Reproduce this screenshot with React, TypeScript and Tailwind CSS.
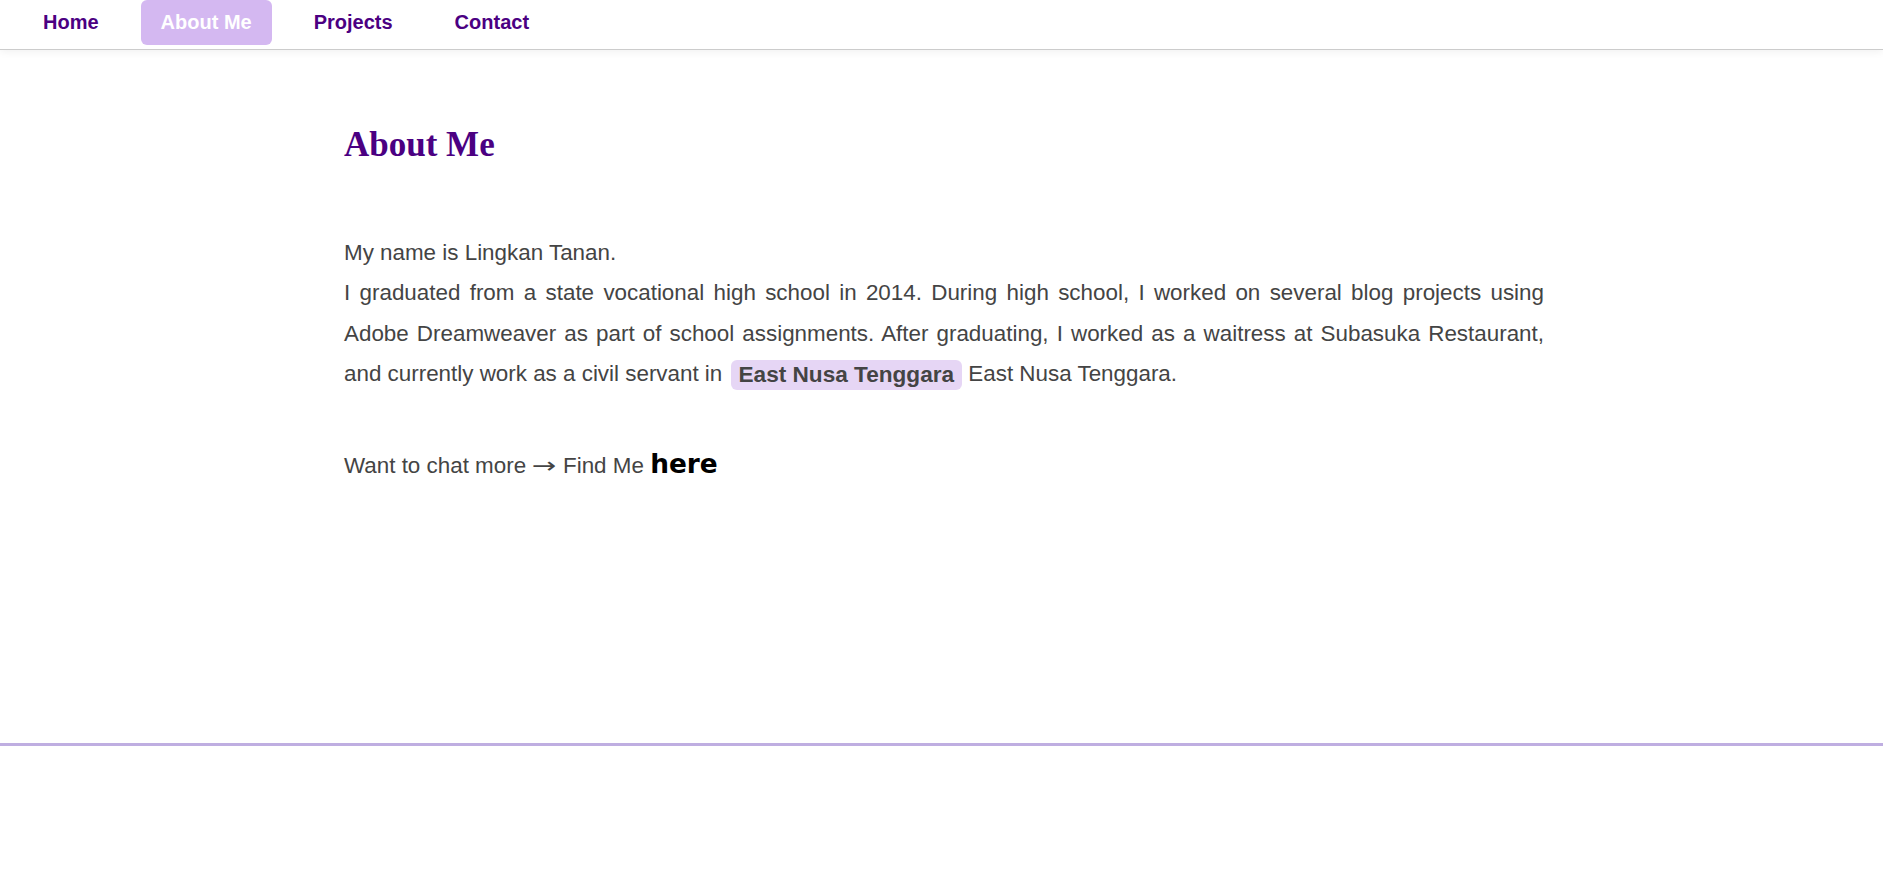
import React from "react";

const navItems = [
  { label: "Home", active: false },
  { label: "About Me", active: true },
  { label: "Projects", active: false },
  { label: "Contact", active: false },
];

export default function App() {
  return (
    <div className="min-h-[877px] bg-white" style={{ fontFamily: '"Liberation Sans", Arial, sans-serif' }}>
      <nav className="relative h-[50px] border-b border-[#cccccc] bg-white shadow-[0_2px_8px_rgba(0,0,0,0.06)]">
        <ul className="flex items-start gap-[22px] pl-[23px]">
          {navItems.map((item) => (
            <li key={item.label}>
              <a
                href="#"
                className={
                  "flex h-[45px] items-center rounded-[6px] px-5 text-[20px] font-bold leading-[23px] " +
                  (item.active ? "bg-[#d4b8f1] text-white" : "text-[#4b0082]")
                }
              >
                {item.label}
              </a>
            </li>
          ))}
        </ul>
      </nav>

      <main className="h-[693px]">
        <div className="mx-auto w-[1205px] pl-[5px] pt-[75px]">
          <h1
            className="text-[35px] font-bold leading-[40px] text-[#4b0082]"
            style={{ fontFamily: '"Liberation Serif", "Times New Roman", serif' }}
          >
            About Me
          </h1>
          <p className="mt-[68px] text-justify text-[22.4px] leading-[40.4px] text-[#444444]">
            My name is Lingkan Tanan.
            <br />
            I graduated from a state vocational high school in 2014. During high school, I worked on several blog
            projects using Adobe Dreamweaver as part of school assignments. After graduating, I worked as a waitress at
            Subasuka Restaurant, and currently work as a civil servant in{" "}
            <span className="ml-[2px] inline-block rounded-[6px] bg-[#e6d6f5] px-[8px] align-middle text-[22.6px] font-bold leading-[30px] text-[#444444]">
              East Nusa Tenggara
            </span>{" "}
            East Nusa Tenggara.
          </p>
          <p className="mt-[49px] text-[22.4px] leading-[40px] text-[#444444]">
            Want to chat more{" "}
            <span
              style={{ fontFamily: '"DejaVu Sans", sans-serif' }}
              className="mr-[6px] inline-block origin-left scale-x-[1.33] text-[22px]"
            >
              →
            </span>{" "}
            Find Me{" "}
            <a
              href="#"
              className="text-[26.4px] font-bold text-black"
              style={{ fontFamily: '"DejaVu Sans", sans-serif' }}
            >
              here
            </a>
          </p>
        </div>
      </main>

      <footer className="h-[134px] border-t-[3px] border-[#bfaee1] bg-white" />
    </div>
  );
}
